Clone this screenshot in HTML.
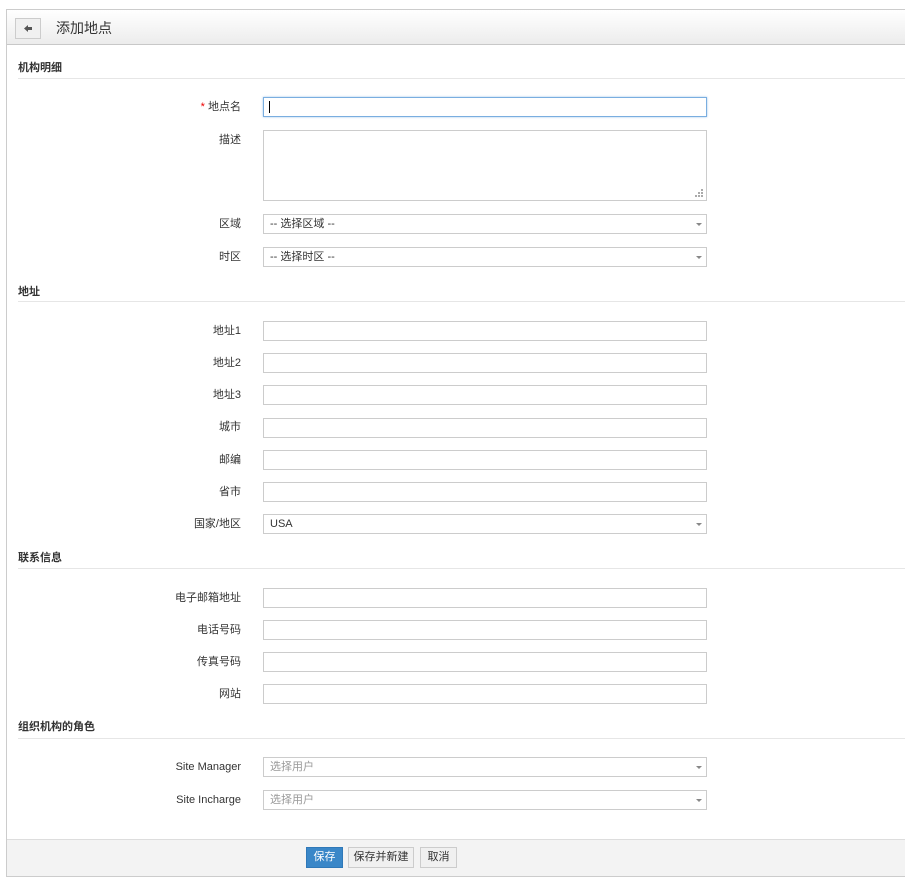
<!DOCTYPE html>
<html><head><meta charset="utf-8"><style>
*{box-sizing:border-box;margin:0;padding:0}
body{width:905px;height:881px;background:#fff;font-family:"Liberation Sans","Noto Sans CJK SC",sans-serif;font-size:11px;color:#333;position:relative;overflow:hidden}
.frame{position:absolute;left:6px;top:9px;width:899px;height:868px;border:1px solid #ccc;border-right:none}
.hdr{position:absolute;left:7px;top:10px;width:898px;height:35px;background:linear-gradient(#fff,#ececec);border-bottom:1px solid #c8c8c8}
.back{position:absolute;left:15px;top:18px;width:26px;height:21px;border:1px solid #ccc;background:#f0f0f0}
.title{position:absolute;left:56px;top:18px;font-size:14px;color:#333}
.sec{position:absolute;left:18px;font-weight:bold;font-size:11px;color:#333;margin-top:-3px}
.line{position:absolute;left:18px;width:887px;height:1px;background:#e6e6e6}
.lbl{position:absolute;right:664px;font-size:11px;color:#333;text-align:right;margin-top:-3px}
.in{position:absolute;left:263px;width:444px;height:20px;border:1px solid #ccc;background:#fff;font-size:11px;padding-left:6px;line-height:18px}
.sel::after{content:"";position:absolute;right:4px;top:8px;border-left:3px solid transparent;border-right:3px solid transparent;border-top:3px solid #888}
.ph{color:#999}
.foot{position:absolute;left:7px;top:839px;width:898px;height:37px;background:#f3f3f3;border-top:1px solid #ddd}
.btn{position:absolute;top:847px;height:21px;border:1px solid #ccc;background:#f0f0f0;font-size:11px;text-align:center;line-height:19px;color:#333}
</style></head><body>
<div class="frame"></div>
<div class="hdr"></div>
<div class="back"><svg width="24" height="19" viewBox="0 0 24 19"><path d="M8 9.5l4-3.5v2h4v3h-4v2z" fill="#555"/></svg></div>
<div class="title">添加地点</div>

<div class="sec" style="top:62px">机构明细</div><div class="line" style="top:78px"></div>
<div class="lbl" style="top:101px"><span style="color:#e00">*</span> 地点名</div>
<div class="in" style="top:97px;border-color:#7aaee0;box-shadow:0 0 2px #9cc4ea"><span style="display:inline-block;width:1px;height:12px;background:#000;vertical-align:middle;margin-left:-1px"></span></div>
<div class="lbl" style="top:134px">描述</div>
<div class="in" style="top:130px;height:71px"><svg style="position:absolute;right:2px;bottom:2px" width="9" height="9"><g fill="#aaa"><rect x="6" y="0" width="2" height="2"/><rect x="3" y="3" width="2" height="2"/><rect x="6" y="3" width="2" height="2"/><rect x="0" y="6" width="2" height="2"/><rect x="3" y="6" width="2" height="2"/><rect x="6" y="6" width="2" height="2"/></g></svg></div>
<div class="lbl" style="top:218px">区域</div><div class="in sel" style="top:214px">-- 选择区域 --</div>
<div class="lbl" style="top:251px">时区</div><div class="in sel" style="top:247px">-- 选择时区 --</div>

<div class="sec" style="top:286px">地址</div><div class="line" style="top:301px"></div>
<div class="lbl" style="top:325px">地址1</div><div class="in" style="top:321px"></div>
<div class="lbl" style="top:357px">地址2</div><div class="in" style="top:353px"></div>
<div class="lbl" style="top:389px">地址3</div><div class="in" style="top:385px"></div>
<div class="lbl" style="top:421px">城市</div><div class="in" style="top:418px"></div>
<div class="lbl" style="top:454px">邮编</div><div class="in" style="top:450px"></div>
<div class="lbl" style="top:486px">省市</div><div class="in" style="top:482px"></div>
<div class="lbl" style="top:518px">国家/地区</div><div class="in sel" style="top:514px">USA</div>

<div class="sec" style="top:552px">联系信息</div><div class="line" style="top:568px"></div>
<div class="lbl" style="top:592px">电子邮箱地址</div><div class="in" style="top:588px"></div>
<div class="lbl" style="top:624px">电话号码</div><div class="in" style="top:620px"></div>
<div class="lbl" style="top:656px">传真号码</div><div class="in" style="top:652px"></div>
<div class="lbl" style="top:688px">网站</div><div class="in" style="top:684px"></div>

<div class="sec" style="top:721px">组织机构的角色</div><div class="line" style="top:738px"></div>
<div class="lbl" style="top:761px;margin-top:0">Site Manager</div><div class="in sel ph" style="top:757px">选择用户</div>
<div class="lbl" style="top:794px;margin-top:0">Site Incharge</div><div class="in sel ph" style="top:790px">选择用户</div>

<div class="foot"></div>
<div class="btn" style="left:306px;width:37px;background:#3a87c8;border-color:#2f78b8;color:#fff">保存</div>
<div class="btn" style="left:348px;width:66px">保存并新建</div>
<div class="btn" style="left:420px;width:37px">取消</div>
</body></html>
